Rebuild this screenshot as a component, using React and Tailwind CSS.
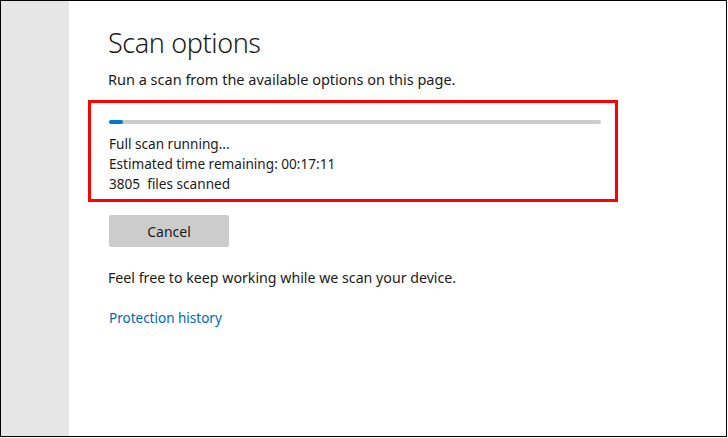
import React from "react";

export default function App() {
  return (
    <div className="w-[728px] h-[438px] bg-white" style={{ fontFamily: '"Noto Sans", "Open Sans", sans-serif' }}>
      <div className="w-[727px] h-[437px] border border-black flex">
        {/* left nav strip */}
        <div className="w-[68px] bg-[#e6e6e6]" />

        <div className="flex-1 flex flex-col pl-[39px] pt-[24px]">
          <h1 className="text-[27px] leading-[36px] text-[#1b1b1b] font-light tracking-[-0.4px]">Scan options</h1>
          <p className="mt-[8px] text-[14.5px] leading-[20px] text-[#1b1b1b]">
            Run a scan from the available options on this page.
          </p>

          {/* highlighted progress area */}
          <div className="mt-[11px] -ml-[20px] w-[530px] h-[102px] border-[3px] border-[#ff0000] pl-[18px] pt-[17px]">
            <div className="w-[492px] h-[4px] bg-[#cccccc] rounded-full">
              <div className="w-[14px] h-[4px] bg-[#0078d4] rounded-full" />
            </div>
            <div className="mt-[10px] text-[13.6px] leading-[20px] text-[#1b1b1b]">
              <div>Full scan running...</div>
              <div>Estimated time remaining:&nbsp;00:17:11</div>
              <div>3805&nbsp; files scanned</div>
            </div>
          </div>

          <button className="mt-[13px] ml-[1px] w-[120px] h-[32px] bg-[#cccccc] rounded-[2px] text-[14px] text-[#1b1b1b]">
            Cancel
          </button>

          <p className="mt-[21px] text-[14.2px] leading-[20px] text-[#1b1b1b]">
            Feel free to keep working while we scan your device.
          </p>

          <a className="mt-[20px] text-[13.5px] leading-[20px] text-[#0067c0] ml-[1px]">Protection history</a>
        </div>
      </div>
    </div>
  );
}
